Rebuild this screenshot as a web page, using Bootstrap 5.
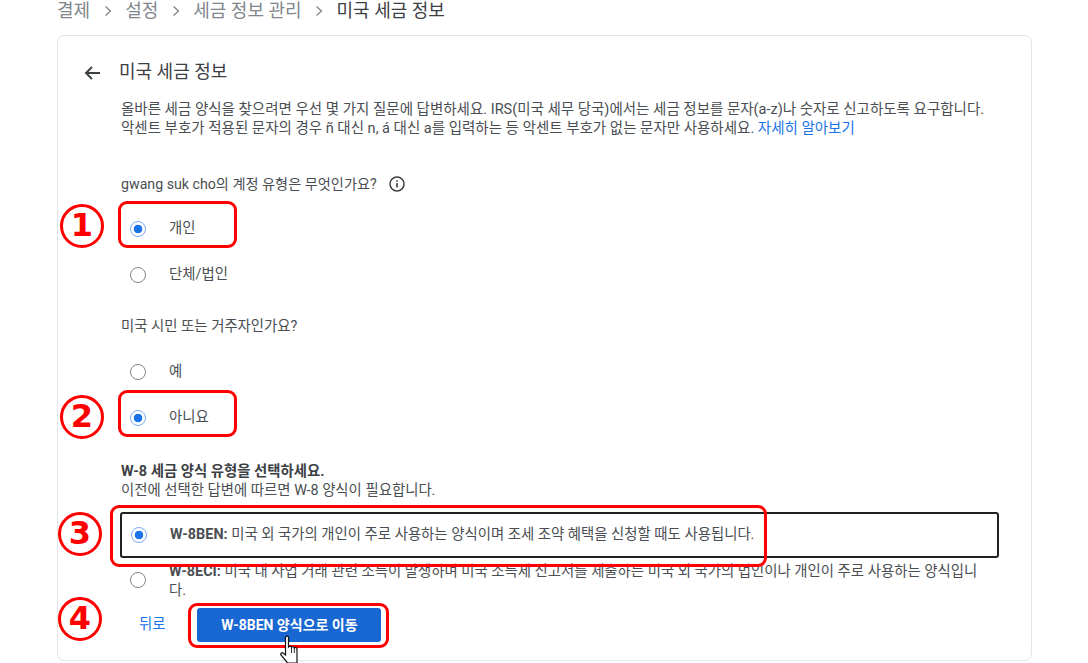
<!DOCTYPE html>
<html lang="ko">
<head>
<meta charset="utf-8">
<title>미국 세금 정보</title>
<link href="https://cdn.jsdelivr.net/npm/bootstrap@5.3.0/dist/css/bootstrap.min.css" rel="stylesheet">
<style>
html,body{height:100%;overflow:hidden;background:#fff}
body{font-family:Roboto,"Noto Sans CJK KR",sans-serif;font-size:14.4px;color:#4a4e52;position:relative}
.crumbs{height:35px;padding:1px 0 0 57px;font-size:18px;line-height:20px;color:#80868b;gap:13.5px}
.crumbs .sep{width:8px;height:12px}
.crumbs .now{color:#3c4043}
.panel{margin:0 56px 0 57px;height:626px;border:1.5px solid #e4e5e7;border-radius:7px;overflow:hidden;background:#fff}
.head{padding:24px 0 0 25px;height:50px;gap:18px;font-size:18px;line-height:24px;color:#3c4043}
.intro{margin:14px 30px 0 63px;line-height:19px;height:38px;white-space:nowrap;font-size:14.5px}
.intro a{color:#1a73e8;text-decoration:none}
.ask{margin:34px 0 0 63px;height:24px;gap:12px;line-height:24px;font-size:14.2px}
.opt{height:46px;padding-left:72px;gap:23px}
.dot{width:16px;height:16px;border-radius:50%;border:1.5px solid #80868b;background:#fff;flex:none}
.dot.on{border-color:#7baaf7;background:radial-gradient(circle,#1a73e8 0 4px,#fff 4.6px)}
.opt-first{margin-top:10px}
.q2{margin:17px 0 0 63px;height:23px;line-height:23px}
.q2x{margin-top:11px}
.w8{margin:21px 0 0 63px;line-height:19px}
.w8 b{font-weight:700;color:#3c4043}
.picked{margin:12px 32px 0 62px;height:46px;border:2px solid #202124;border-radius:3px;padding-left:9px;gap:23px}
.picked b,.other b{font-weight:700}
.other{margin:0 40px 0 72px;height:42px;gap:23px;padding-top:4px;line-height:19px}
.other .dot{margin-top:10px}
.acts{margin:8px 0 0 81px;gap:32px}
.acts a{color:#1a73e8;text-decoration:none}
.go{width:184px;height:34px;background:#1967d2;border:0;border-radius:3px;font-size:14px;font-weight:700;color:#fff;padding:0;line-height:34px}
.go:hover{background:#1967d2;color:#fff}
.redbox{position:absolute;border:3px solid #f00;border-radius:9px;pointer-events:none}
.num{position:absolute;width:44px;height:44px;border:3px solid #f00;border-radius:50%;color:#f00;font:700 32px/37px "DejaVu Sans",sans-serif;text-align:center}
.hand{position:absolute;left:279px;top:635px;width:26px;height:28px}
</style>
</head>
<body>
<nav class="crumbs d-flex align-items-start">
<span>결제</span>
<svg class="sep mt-1" viewBox="0 0 8 12"><path d="M1.5 1.5 6.5 6l-5 4.500" fill="none" stroke="#80868b" stroke-width="1.300"/></svg>
<span>설정</span>
<svg class="sep mt-1" viewBox="0 0 8 12"><path d="M1.5 1.5 6.5 6l-5 4.500" fill="none" stroke="#80868b" stroke-width="1.300"/></svg>
<span>세금 정보 관리</span>
<svg class="sep mt-1" viewBox="0 0 8 12"><path d="M1.5 1.5 6.5 6l-5 4.500" fill="none" stroke="#80868b" stroke-width="1.300"/></svg>
<span class="now">미국 세금 정보</span>
</nav>
<main class="panel">
<div class="head d-flex align-items-start">
<svg class="mt-1" width="18" height="18" viewBox="0 0 18 18"><path d="M17 9H2.500M9 3 3 9l6 6" fill="none" stroke="#3c4043" stroke-width="1.900"/></svg>
<span>미국 세금 정보</span>
</div>
<p class="intro">올바른 세금 양식을 찾으려면 우선 몇 가지 질문에 답변하세요. IRS(미국 세무 당국)에서는 세금 정보를 문자(a-z)나 숫자로 신고하도록 요구합니다.<br>악센트 부호가 적용된 문자의 경우 ñ 대신 n, á 대신 a를 입력하는 등 악센트 부호가 없는 문자만 사용하세요. <a href="#">자세히 알아보기</a></p>
<div class="ask d-flex align-items-center">
<span>gwang suk cho의 계정 유형은 무엇인가요?</span>
<svg width="16" height="16" viewBox="0 0 16 16"><circle cx="8" cy="8" r="7" fill="none" stroke="#3c4043" stroke-width="1.500"/><path d="M8 7v4.500M8 4.200v1.600" stroke="#3c4043" stroke-width="1.600"/></svg>
</div>
<div class="opt opt-first d-flex align-items-center"><span class="dot on"></span><span>개인</span></div>
<div class="opt d-flex align-items-center"><span class="dot"></span><span>단체/법인</span></div>
<div class="q2">미국 시민 또는 거주자인가요?</div>
<div class="opt q2x d-flex align-items-center"><span class="dot"></span><span>예</span></div>
<div class="opt d-flex align-items-center"><span class="dot on"></span><span>아니요</span></div>
<div class="w8"><b>W-8 세금 양식 유형을 선택하세요.</b><br>이전에 선택한 답변에 따르면 W-8 양식이 필요합니다.</div>
<div class="picked d-flex align-items-center"><span class="dot on"></span><span><b>W-8BEN:</b> 미국 외 국가의 개인이 주로 사용하는 양식이며 조세 조약 혜택을 신청할 때도 사용됩니다.</span></div>
<div class="other d-flex align-items-start"><span class="dot"></span><span><b>W-8ECI:</b> 미국 내 사업 거래 관련 소득이 발생하며 미국 소득세 신고서를 제출하는 미국 외 국가의 법인이나 개인이 주로 사용하는 양식입니다.</span></div>
<div class="acts d-flex align-items-center"><a href="#">뒤로</a><button class="btn go" type="button">W-8BEN 양식으로 이동</button></div>
</main>
<div class="redbox" style="left:118px;top:201px;width:119px;height:47px"></div>
<div class="redbox" style="left:118px;top:390px;width:119px;height:47px"></div>
<div class="redbox" style="left:110px;top:505px;width:657px;height:62px"></div>
<div class="redbox" style="left:188px;top:603px;width:201px;height:45px"></div>
<div class="num" style="left:60px;top:204px">1</div>
<div class="num" style="left:60px;top:395px">2</div>
<div class="num" style="left:58px;top:512px">3</div>
<div class="num" style="left:58px;top:597px">4</div>
<svg class="hand" viewBox="0 0 26 28"><path d="M7 1.500c1.200-1 2.500-.2 2.500 1V12c1-1 2.500-1 3 .2 1-.8 2.400-.5 2.800.6 1-.6 2.400-.2 2.700 1V28H8.500L2 20c-1-1.500.7-3 2-2l2.500 2V2.500Z" fill="#fff" stroke="#111" stroke-width="1.200"/><path d="M12.500 12.500V18M15.300 13v5" stroke="#111" stroke-width=".9"/></svg>
</body>
</html>
